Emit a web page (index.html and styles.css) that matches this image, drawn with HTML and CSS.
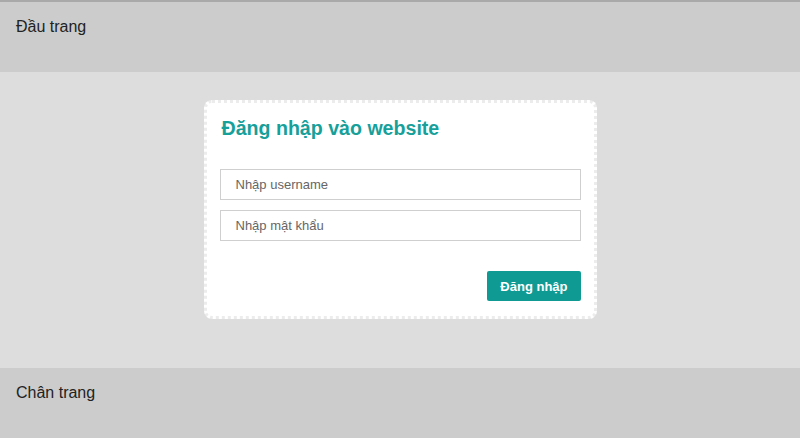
FILE: index.html
```html
<!DOCTYPE html>
<html lang="vi">
<head>
<meta charset="utf-8">
<title>Đăng nhập</title>
<link rel="stylesheet" href="styles.css">
</head>
<body>
<div class="page">
  <header class="site-header">Đầu trang</header>
  <main class="site-main">
    <form class="login-card">
      <h2 class="login-title">Đăng nhập vào website</h2>
      <div class="fields">
        <input class="field" type="text" placeholder="Nhập username">
        <input class="field" type="password" placeholder="Nhập mật khẩu">
      </div>
      <div class="actions">
        <button class="btn" type="button">Đăng nhập</button>
      </div>
    </form>
  </main>
  <footer class="site-footer">Chân trang</footer>
</div>
</body>
</html>
```
FILE: styles.css
```css
html, body {
  margin: 0;
  padding: 0;
  background: #fff;
}
body {
  font-family: "Liberation Sans", Arial, sans-serif;
  color: #222;
}
.page {
  height: 438px;
  display: flex;
  flex-direction: column;
  border-top: 2px solid #a9a9a9;
  box-sizing: border-box;
}
.site-header {
  height: 70px;
  box-sizing: border-box;
  background: #cccccc;
  padding: 16px 16px;
  font-size: 16px;
}
.site-main {
  flex: 1;
  background: #dddddd;
  display: flex;
  justify-content: center;
  align-items: flex-start;
  padding-top: 28px;
}
.site-footer {
  height: 70px;
  box-sizing: border-box;
  background: #cccccc;
  padding: 16px 16px;
  font-size: 16px;
}
.login-card {
  width: 393px;
  box-sizing: border-box;
  background: #fff;
  border: 3px dotted #ececec;
  border-radius: 8px;
  padding: 13px 13px 15px 13px;
  display: flex;
  flex-direction: column;
}
.login-title {
  margin: 0 0 29px 2px;
  font-size: 19.6px;
  font-weight: bold;
  color: #17a09a;
  line-height: 24px;
  padding-top: 0;
}
.fields {
  display: flex;
  flex-direction: column;
  gap: 10px;
}
.field {
  height: 31px;
  box-sizing: border-box;
  margin: 0;
  border: 1px solid #cfcfcf;
  padding: 0 15px;
  font-family: "Liberation Sans", Arial, sans-serif;
  font-size: 13px;
  color: #333;
  outline: none;
}
.field::placeholder {
  color: #666;
}
.actions {
  display: flex;
  justify-content: flex-end;
  margin-top: 30px;
}
.btn {
  height: 30px;
  padding: 0 13px;
  border: none;
  border-radius: 2px;
  background: #0f9a93;
  color: #fff;
  font-family: "Liberation Sans", Arial, sans-serif;
  font-size: 13px;
  font-weight: bold;
  cursor: pointer;
}
```
